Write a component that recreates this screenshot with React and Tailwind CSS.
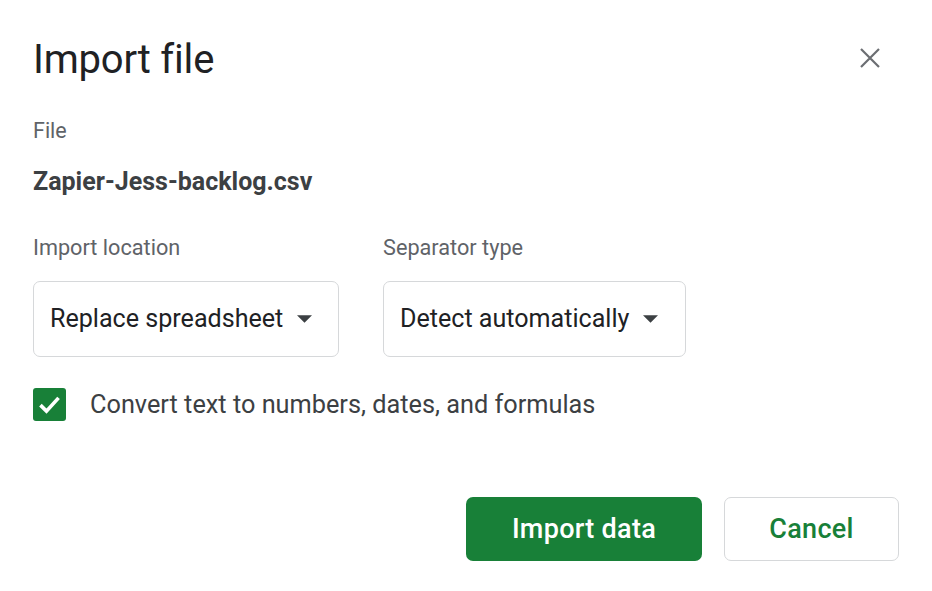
import React, { useState } from 'react';

const Caret = () => (
    <svg viewBox="0 0 10 5" className="w-[15px] h-[8px] fill-[#3c4043]">
        <path d="M0 0 L10 0 L5 5 Z" />
    </svg>
);

const Select = ({ value, width }) => (
    <div className={`${width} h-[76px] flex items-center gap-[14px] pl-[16px] border border-[#d6d8da] rounded-[7px] bg-white`}>
        <span className="text-[25.1px] leading-[30px] text-[#202124]">{value}</span>
        <Caret />
    </div>
);

const App = () => {
    const [convert, setConvert] = useState(true);

    return (
        <div className="w-[932px] h-[591px] bg-white font-['Roboto',_'Liberation_Sans',_sans-serif] pl-[33px] pr-[33px] pt-[36px] flex flex-col">
            <div className="flex items-start justify-between">
                <h1 className="text-[40px] leading-[48px] text-[#202124] tracking-[-0.2px]">Import file</h1>
                <button className="mt-[11px] mr-[18px] w-[22px] h-[22px] flex items-center justify-center">
                    <svg viewBox="0 0 22 22" className="w-[22px] h-[22px]">
                        <path d="M2 2 L20 20 M20 2 L2 20" stroke="#6b6e72" strokeWidth="2.2" />
                    </svg>
                </button>
            </div>

            <div className="mt-[34px] text-[21.5px] leading-[26px] text-[#5f6368]">File</div>
            <div className="mt-[24px] text-[25px] leading-[28px] font-bold text-[#3c4043]">Zapier-Jess-backlog.csv</div>

            <div className="mt-[39px] flex gap-[44px]">
                <div className="flex flex-col">
                    <div className="text-[21.7px] leading-[26px] text-[#5f6368]">Import location</div>
                    <div className="mt-[20px]">
                        <Select value="Replace spreadsheet" width="w-[306px]" />
                    </div>
                </div>
                <div className="flex flex-col">
                    <div className="text-[21.7px] leading-[26px] text-[#5f6368]">Separator type</div>
                    <div className="mt-[20px]">
                        <Select value="Detect automatically" width="w-[303px]" />
                    </div>
                </div>
            </div>

            <label className="mt-[31px] flex items-center gap-[24px] cursor-pointer">
                <button
                    onClick={() => setConvert(!convert)}
                    className={`w-[33px] h-[33px] rounded-[3px] flex items-center justify-center ${convert ? 'bg-[#188038]' : 'border-2 border-[#5f6368]'}`}
                >
                    {convert && (
                        <svg viewBox="0 0 24 24" className="w-[29px] h-[29px]">
                            <path d="M4.5 12.5 L9.5 17.5 L19.5 6.5" fill="none" stroke="white" strokeWidth="3" />
                        </svg>
                    )}
                </button>
                <span className="text-[25.3px] leading-[30px] text-[#3c4043]">Convert text to numbers, dates, and formulas</span>
            </label>

            <div className="mt-[76px] flex justify-end gap-[22px]">
                <button className="w-[236px] h-[64px] rounded-[7px] bg-[#188038] text-white text-[27px] font-medium tracking-[0.3px]">
                    Import data
                </button>
                <button className="w-[175px] h-[64px] rounded-[7px] border border-[#d6d8da] bg-white text-[#188038] text-[27px] font-medium tracking-[0.3px]">
                    Cancel
                </button>
            </div>
        </div>
    );
};

export default App;
